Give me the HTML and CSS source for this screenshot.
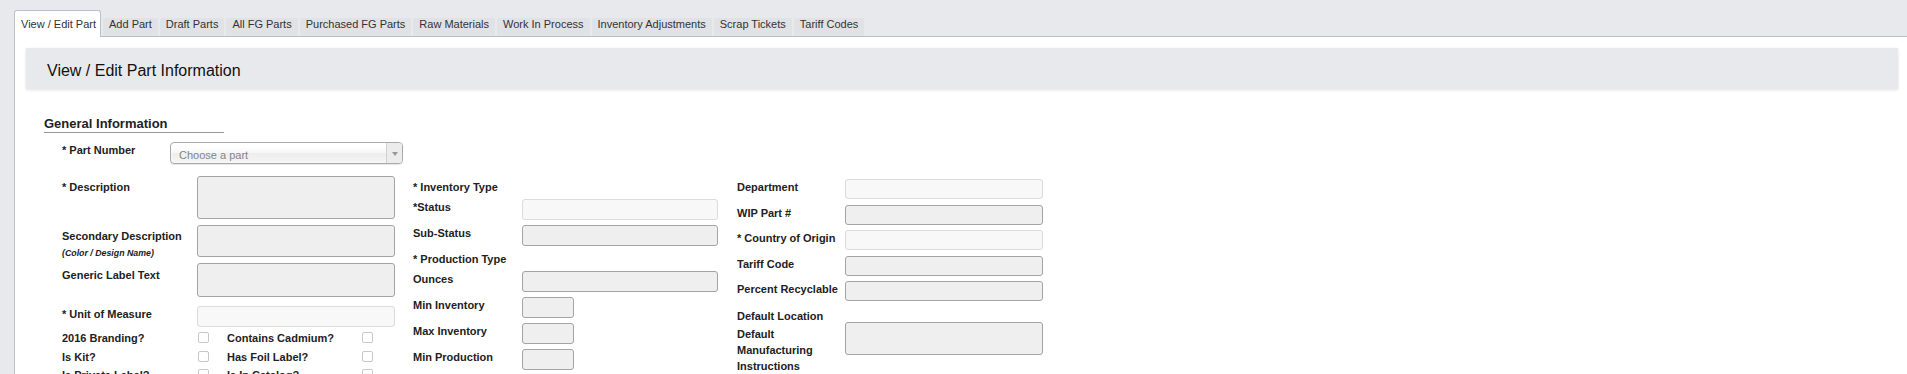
FILE: index.html
```html
<!DOCTYPE html>
<html lang="en">
<head>
<meta charset="utf-8">
<title>View / Edit Part</title>
<link rel="stylesheet" href="styles.css">
</head>
<body>
<div class="tabs">
  <div class="tab active">View / Edit Part</div>
  <div class="tab">Add Part</div>
  <div class="tab">Draft Parts</div>
  <div class="tab">All FG Parts</div>
  <div class="tab">Purchased FG Parts</div>
  <div class="tab">Raw Materials</div>
  <div class="tab">Work In Process</div>
  <div class="tab">Inventory Adjustments</div>
  <div class="tab">Scrap Tickets</div>
  <div class="tab">Tariff Codes</div>
</div>
<div class="panel">
  <div class="title-bar"><h1>View / Edit Part Information</h1></div>
  <div class="form">
    <h2 class="section">General Information</h2>
    <div class="part-row">
      <label class="lbl">* Part Number</label>
      <div class="chosen"><span class="ph">Choose a part</span><span class="arrow"><b></b></span></div>
    </div>
    <div class="cols">
      <div class="col col1">
        <div class="row gap6"><label class="lbl lbl-ta">* Description</label><textarea class="field ta-desc"></textarea></div>
        <div class="row gap6"><label class="lbl lbl-ta">Secondary Description<span class="sub">(Color / Design Name)</span></label><textarea class="field ta-sec"></textarea></div>
        <div class="row gap9"><label class="lbl lbl-ta lbl-ta6">Generic Label Text</label><textarea class="field ta-gen"></textarea></div>
        <div class="row"><label class="lbl">* Unit of Measure</label><input class="field light"></div>
        <div class="checks">
          <label class="lbl">2016 Branding?</label><input type="checkbox" class="cb"><label class="lbl">Contains Cadmium?</label><input type="checkbox" class="cb">
          <label class="lbl">Is Kit?</label><input type="checkbox" class="cb"><label class="lbl">Has Foil Label?</label><input type="checkbox" class="cb">
          <label class="lbl">Is Private Label?</label><input type="checkbox" class="cb"><label class="lbl">Is In Catalog?</label><input type="checkbox" class="cb">
        </div>
      </div>
      <div class="col col2">
        <div class="row lo"><label class="lbl">* Inventory Type</label></div>
        <div class="row inp"><label class="lbl">*Status</label><input class="field light"></div>
        <div class="row inp"><label class="lbl">Sub-Status</label><input class="field"></div>
        <div class="row lo"><label class="lbl">* Production Type</label></div>
        <div class="row inp"><label class="lbl">Ounces</label><input class="field"></div>
        <div class="row inp"><label class="lbl">Min Inventory</label><input class="field small"></div>
        <div class="row inp"><label class="lbl">Max Inventory</label><input class="field small"></div>
        <div class="row inp"><label class="lbl">Min Production</label><input class="field small"></div>
      </div>
      <div class="col col3">
        <div class="row inp"><label class="lbl">Department</label><input class="field light"></div>
        <div class="row inp"><label class="lbl">WIP Part #</label><input class="field"></div>
        <div class="row inp"><label class="lbl">* Country of Origin</label><input class="field light"></div>
        <div class="row inp"><label class="lbl">Tariff Code</label><input class="field"></div>
        <div class="row inp"><label class="lbl">Percent Recyclable</label><input class="field"></div>
        <div class="row lo-short"><label class="lbl">Default Location</label></div>
        <div class="row"><label class="lbl lbl-multi">Default Manufacturing Instructions</label><textarea class="field ta-mfg"></textarea></div>
      </div>
    </div>
  </div>
</div>
</body>
</html>
```

FILE: styles.css
```css
* { box-sizing: border-box; }
html, body { margin: 0; padding: 0; overflow: hidden; }
body {
  background: #e8e9ec;
  font-family: "Liberation Sans", Arial, Helvetica, sans-serif;
  color: #222;
}

/* Tabs */
.tabs {
  display: flex;
  align-items: flex-end;
  height: 36px;
  padding-left: 14px;
  gap: 2px;
}
.tab {
  font-size: 11px;
  line-height: 13px;
  color: #333;
  height: 18px;
  padding: 0 6px 5px;
  background: #e1e2e5;
  border-radius: 2px 2px 0 0;
  white-space: nowrap;
}
.tab.active {
  height: 27px;
  margin-bottom: -1px;
  padding: 7px 4px 6px 6px;
  background: #fff;
  border: 1px solid #b8c0c8;
  border-bottom: none;
  border-radius: 3px 3px 0 0;
  position: relative;
  z-index: 1;
}

/* Panel */
.panel {
  margin-left: 14px;
  background: #fff;
  border-top: 1px solid #b8c0c8;
  border-left: 1px solid #b8c0c8;
  padding: 11px 9px 40px 11px;
}
.title-bar {
  height: 41px;
  background: #e8e9ec;
  padding: 13px 0 0 21px;
  box-shadow: 0 1px 3px rgba(0, 0, 0, 0.12);
}
.title-bar h1 {
  margin: 0;
  font-size: 16px;
  line-height: 20px;
  font-weight: normal;
  color: #111;
}

/* Form */
.form { padding: 27px 0 0 18px; }
.section {
  margin: 0;
  width: 180px;
  font-size: 13px;
  line-height: 15px;
  font-weight: bold;
  padding-bottom: 1px;
  border-bottom: 1px solid #999;
  color: #222;
}
.lbl {
  display: block;
  flex: none;
  font-size: 11px;
  line-height: 13px;
  font-weight: bold;
  color: #222;
  padding-top: 2px;
}
.part-row {
  display: flex;
  margin-top: 9px;
  padding-left: 18px;
}
.part-row .lbl { width: 108px; }

.chosen {
  width: 233px;
  height: 22px;
  display: flex;
  align-items: center;
  border: 1px solid #aaa;
  border-radius: 4px;
  background: linear-gradient(#fff 20%, #f6f6f6 50%, #eee 52%, #f4f4f4);
  box-shadow: 0 0 3px #fff inset, 0 1px 1px rgba(0, 0, 0, 0.1);
  font-size: 11px;
  color: #858585;
}
.ph { flex: 1; padding: 3px 0 0 8px; }
.arrow {
  width: 16px;
  align-self: stretch;
  border-left: 1px solid #d0d0d0;
  background: #ececec;
  border-radius: 0 3px 3px 0;
  display: flex;
  align-items: center;
  justify-content: center;
}
.arrow b {
  width: 0;
  height: 0;
  border-left: 3px solid transparent;
  border-right: 3px solid transparent;
  border-top: 4px solid #999;
  margin-top: 2px;
}

.cols {
  display: flex;
  align-items: flex-start;
  margin-top: 12px;
  padding-left: 18px;
}
.col { flex: none; }
.col1 { width: 333px; margin-right: 18px; }
.col2 { width: 305px; margin-right: 19px; padding-top: 3px; }
.col3 { width: 306px; padding-top: 3px; }
.col1 .lbl { width: 135px; }
.col2 .lbl { width: 109px; }
.col3 .lbl { width: 108px; }

.row { display: flex; align-items: flex-start; }
.gap6 { margin-bottom: 6px; }
.gap9 { margin-bottom: 9px; }
.lo { height: 20px; }
.lo-short { height: 15.5px; }
.lo-short .lbl { padding-top: 3px; }
.col2 .inp { margin-bottom: 5px; }
.col3 .inp { margin-bottom: 5.5px; }

.lbl-ta { padding-top: 5px; }
.lbl-ta6 { padding-top: 6px; }
.lbl-multi { line-height: 16px; padding-top: 4px; }
.sub {
  display: block;
  font-size: 8.8px;
  line-height: 12px;
  font-style: italic;
  margin-top: 4px;
  margin-bottom: -4px;
}

.field {
  display: block;
  flex: none;
  margin: 0;
  padding: 0;
  width: 198px;
  height: 21px;
  border: 1px solid #a4a4a4;
  border-radius: 3px;
  background: #efefef;
  font: inherit;
  resize: none;
  outline: none;
}
.field.light { background: #f8f8f8; border-color: #dcdcdc; }
.col2 .field { width: 196px; }
.col2 .field.small { width: 52px; }
.col3 .field { height: 20px; }
.ta-desc { height: 43px; }
.ta-sec { height: 32px; }
.ta-gen { height: 34px; }
.col3 .ta-mfg { height: 33px; }

.checks {
  display: grid;
  grid-template-columns: 136px 29px 135px 11px;
  grid-auto-rows: 18.5px;
  margin-top: 5px;
}
.checks .lbl { width: auto; padding-top: 0; }
.cb {
  appearance: none;
  -webkit-appearance: none;
  display: block;
  width: 11px;
  height: 11px;
  margin: 0;
  border: 1px solid #c8c8c8;
  border-radius: 2px;
  background: #fff;
}
```
